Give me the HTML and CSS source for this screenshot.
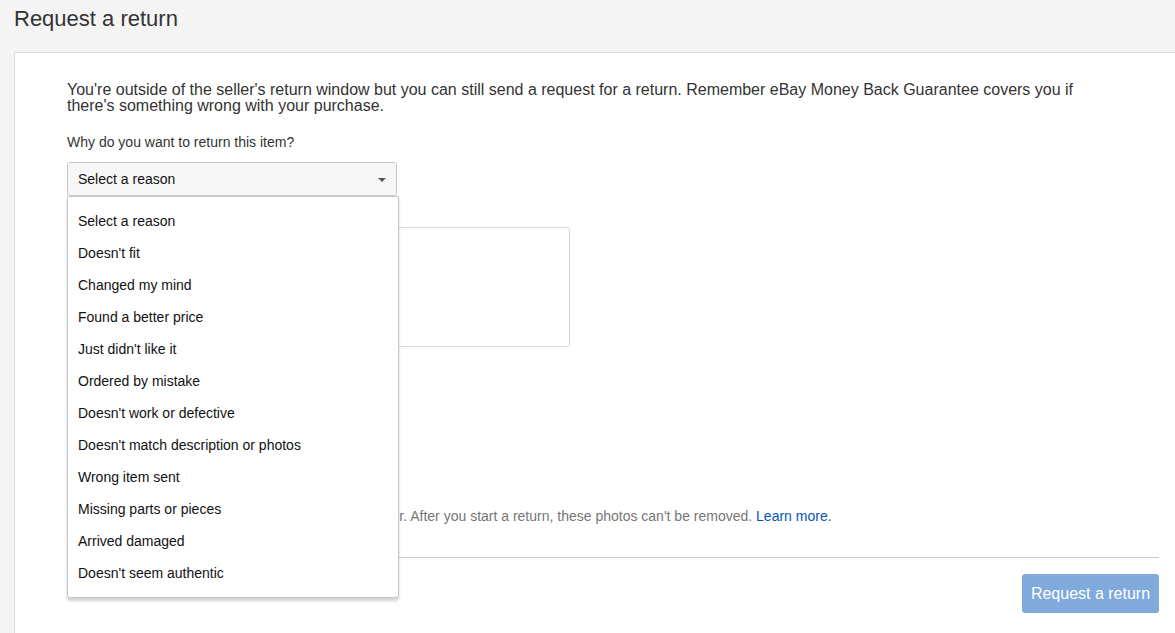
FILE: index.html
```html
<!DOCTYPE html>
<html>
<head>
<meta charset="utf-8">
<link rel="stylesheet" href="styles.css">
</head>
<body>
<h1 class="title">Request a return</h1>
<div class="card">
  <p class="intro">You're outside of the seller's return window but you can still send a request for a return. Remember eBay Money Back Guarantee covers you if there's something wrong with your purchase.</p>
  <div class="field">
    <label class="label">Why do you want to return this item?</label>
    <div class="select-wrap">
      <div class="select">
        <span>Select a reason</span>
        <span class="caret"></span>
      </div>
      <ul class="menu">
        <li>Select a reason</li>
        <li>Doesn't fit</li>
        <li>Changed my mind</li>
        <li>Found a better price</li>
        <li>Just didn't like it</li>
        <li>Ordered by mistake</li>
        <li>Doesn't work or defective</li>
        <li>Doesn't match description or photos</li>
        <li>Wrong item sent</li>
        <li>Missing parts or pieces</li>
        <li>Arrived damaged</li>
        <li>Doesn't seem authentic</li>
      </ul>
    </div>
  </div>
  <div class="comments">
    <textarea class="textarea"></textarea>
  </div>
  <div class="photos">
    <div class="upload"></div>
    <p class="note"><span class="covered">Photo can help the seller see the issue with your orde</span>r. After you start a return, these photos can't be removed. <a href="#" class="link">Learn more.</a></p>
  </div>
  <div class="footer">
    <button class="btn">Request a return</button>
  </div>
</div>
</body>
</html>
```

FILE: styles.css
```css
html, body {
  margin: 0;
  padding: 0;
}
body {
  background: #f4f4f4;
  font-family: "Liberation Sans", Arial, sans-serif;
  color: #333;
  overflow: hidden;
  height: 633px;
}
.title {
  margin: 0;
  padding: 6px 0 0 14px;
  font-size: 22px;
  line-height: 26px;
  font-weight: normal;
  color: #333;
}
.card {
  margin: 20px -20px 0 14px;
  background: #fff;
  border: 1px solid #dcdcdc;
  padding: 29px 35px 40px 52px;
}
.intro {
  margin: 0;
  font-size: 16px;
  line-height: 16px;
  color: #333;
  padding-right: 80px;
}
.field {
  margin-top: 20px;
}
.label {
  display: block;
  font-size: 14px;
  line-height: 16px;
  color: #333;
}
.select-wrap {
  position: relative;
  margin-top: 12px;
  width: 330px;
}
.select {
  height: 32px;
  border: 1px solid #c8c8c8;
  border-radius: 3px;
  background: #f7f7f7;
  display: flex;
  align-items: center;
  justify-content: space-between;
  padding: 0 10px;
  font-size: 14px;
  color: #111;
}
.caret {
  width: 0;
  height: 0;
  border-left: 4px solid transparent;
  border-right: 4px solid transparent;
  border-top: 4px solid #555;
  margin-top: 2px;
}
.menu {
  position: absolute;
  left: 0;
  top: 34px;
  width: 330px;
  margin: 0;
  padding: 8px 0;
  list-style: none;
  background: #fff;
  border: 1px solid #c8c8c8;
  border-radius: 0 0 3px 3px;
  box-shadow: 0 3px 3px rgba(0, 0, 0, 0.18);
  z-index: 5;
}
.menu li {
  height: 32px;
  line-height: 32px;
  padding-left: 10px;
  font-size: 14px;
  color: #111;
}
.comments {
  margin-top: 31px;
}
.textarea {
  display: block;
  width: 503px;
  height: 120px;
  box-sizing: border-box;
  border: 1px solid #d8d8d8;
  border-radius: 3px;
  resize: none;
  margin: 0;
}
.photos {
  margin-top: 20px;
}
.upload {
  height: 141px;
}
.note {
  margin: 0;
  font-size: 14px;
  line-height: 16px;
  color: #767676;
  white-space: nowrap;
}
.covered {
  visibility: hidden;
}
.link {
  color: #0654ba;
  text-decoration: none;
}
.footer {
  margin-top: 33px;
  border-top: 1px solid #ccc;
  padding-top: 16px;
  display: flex;
  justify-content: flex-end;
}
.btn {
  background: #80a9dc;
  color: #fff;
  border: none;
  border-radius: 3px;
  font-family: "Liberation Sans", Arial, sans-serif;
  font-size: 16px;
  height: 39px;
  width: 137px;
  padding: 0;
}
```
